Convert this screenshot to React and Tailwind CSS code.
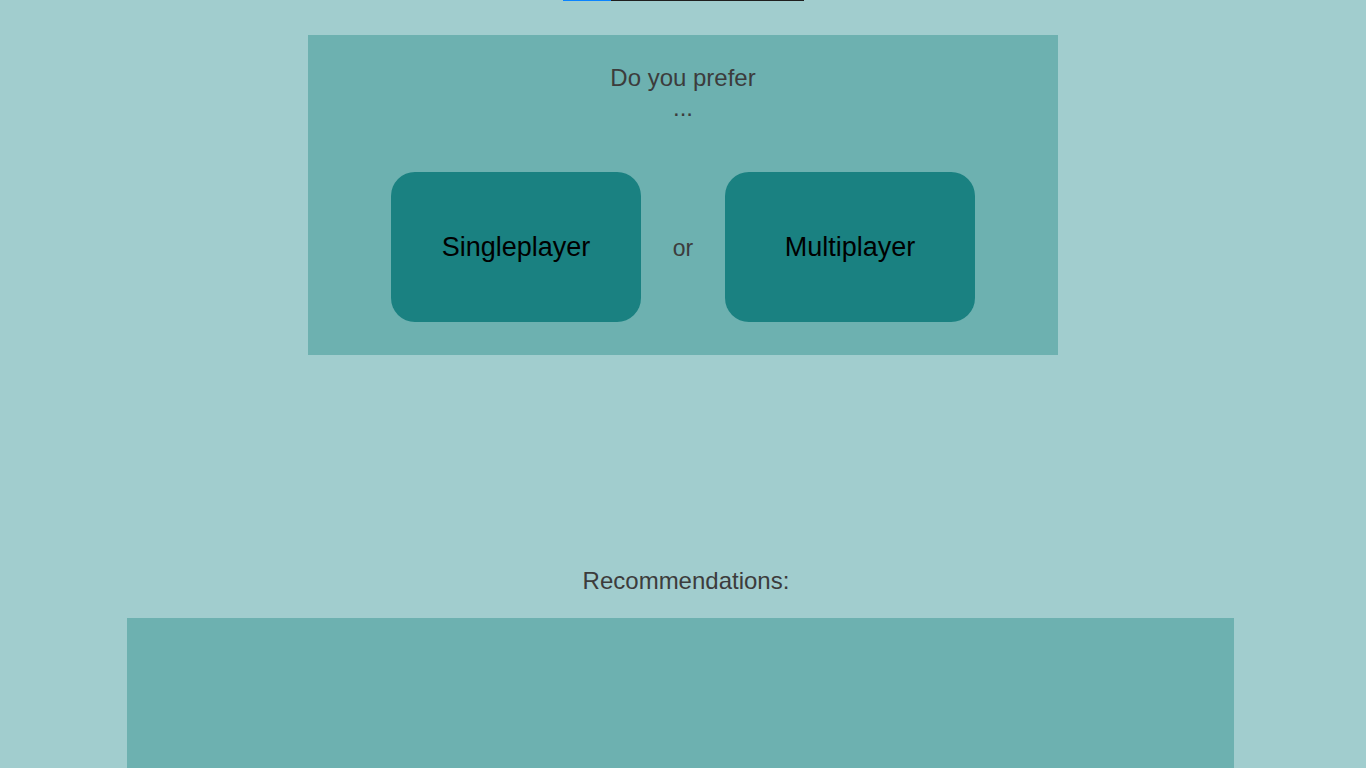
import React from 'react';

const font = { fontFamily: '"Liberation Sans", Arial, sans-serif' };

function ChoiceButton({ label }) {
  return (
    <button className="w-[250px] h-[150px] rounded-[24px] bg-[#1a8181] text-black text-[27px] flex items-center justify-center">
      {label}
    </button>
  );
}

export default function App() {
  return (
    <div className="min-h-[768px] bg-[#a1cdce] flex flex-col items-center text-[#3c3c3c]" style={font}>
      {/* progress line */}
      <div className="w-[241px] h-px bg-[#1f1f1f] flex">
        <div className="w-[48px] h-px bg-[#0a84ff]" />
      </div>

      <section className="mt-[34px] w-[750px] h-[320px] bg-[#6db1b0] flex flex-col items-center">
        <p className="mt-[28px] text-[24px] leading-[30px] text-center">
          Do you prefer
          <br />
          ...
        </p>
        <div className="mt-[49px] flex items-center">
          <ChoiceButton label="Singleplayer" />
          <span className="w-[84px] text-center text-[23px] pt-[2px]">or</span>
          <ChoiceButton label="Multiplayer" />
        </div>
      </section>

      <h2 className="mt-[211px] ml-[6px] text-[24px] leading-[30px] text-center">Recommendations:</h2>

      <section className="mt-[22px] mr-[6px] w-[1107px] h-[200px] bg-[#6db1b0]" />
    </div>
  );
}
